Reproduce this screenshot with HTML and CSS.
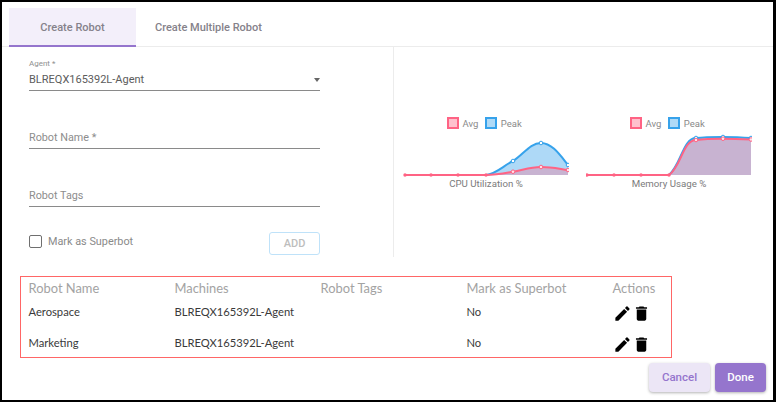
FILE: index.html
```html
<!DOCTYPE html>
<html lang="en">
<head>
<meta charset="utf-8">
<title>Create Robot</title>
<link rel="stylesheet" href="styles.css">
</head>
<body>
<div class="frame">
  <div class="tabs">
    <div class="tab active">Create Robot</div>
    <div class="tab">Create Multiple Robot</div>
  </div>
  <div class="main">
    <div class="form">
      <div class="field select">
        <div class="mini">Agent *</div>
        <div class="value">BLREQX165392L-Agent<span class="caret"></span></div>
      </div>
      <div class="field"><div class="placeholder">Robot Name *</div></div>
      <div class="field"><div class="placeholder">Robot Tags</div></div>
      <div class="check-row">
        <span class="checkbox"></span>
        <span class="check-label">Mark as Superbot</span>
        <span class="add">ADD</span>
      </div>
    </div>
    <div class="charts">
      <div class="chart cpu">
        <div class="legend">
          <span class="swatch pink"></span><span class="legend-text">Avg</span>
          <span class="swatch blue"></span><span class="legend-text">Peak</span>
        </div>
        <svg class="plot" width="166" height="48" viewBox="0 0 166 48">
          <path class="fill-blue" d="M83 46C93 45 100 37 110 32C120 26 127 14 138 14C149 14 157 26 165 36V46Z"/>
          <path class="line-blue" d="M83 46C93 45 100 37 110 32C120 26 127 14 138 14C149 14 157 26 165 36"/>
          <path class="fill-pink" d="M83 46C93 46 100 44.500 110 42.700C120 41 127 38 138 38C149 38 157 40 165 41V46Z"/>
          <path class="line-pink" d="M2 46H83C93 46 100 44.500 110 42.700C120 41 127 38 138 38C149 38 157 40 165 41"/>
          <g class="dots-blue"><circle cx="110" cy="32" r="1.800"/><circle cx="138" cy="14" r="1.800"/><circle cx="165" cy="36" r="1.800"/></g>
          <g class="dots-base"><circle cx="2" cy="46" r="1.700"/><circle cx="28" cy="46" r="1.700"/><circle cx="55" cy="46" r="1.700"/><circle cx="83" cy="46" r="1.700"/></g>
          <g class="dots-pink"><circle cx="110" cy="42.700" r="1.800"/><circle cx="138" cy="38" r="1.800"/><circle cx="165" cy="41" r="1.800"/></g>
        </svg>
        <div class="chart-label">CPU Utilization %</div>
      </div>
      <div class="chart mem">
        <div class="legend">
          <span class="swatch pink"></span><span class="legend-text">Avg</span>
          <span class="swatch blue"></span><span class="legend-text">Peak</span>
        </div>
        <svg class="plot" width="166" height="48" viewBox="0 0 166 48">
          <path class="fill-blue" d="M83 46C95 36 97 9 110 9C122 7.500 148 7.500 165 9V46Z"/>
          <path class="line-blue" d="M83 46C95 36 97 9 110 9C122 7.500 148 7.500 165 9"/>
          <path class="fill-pink" d="M83 46C95 38 97 11 110 11C122 9.500 148 9.700 165 10.500V46Z"/>
          <path class="line-pink" d="M1 46H83C95 38 97 11 110 11C122 9.500 148 9.700 165 10.500"/>
          <g class="dots-blue"><circle cx="110" cy="9" r="1.800"/><circle cx="137" cy="8" r="1.800"/><circle cx="165" cy="9" r="1.800"/></g>
          <g class="dots-base"><circle cx="1" cy="46" r="1.700"/><circle cx="28" cy="46" r="1.700"/><circle cx="55" cy="46" r="1.700"/><circle cx="83" cy="46" r="1.700"/></g>
          <g class="dots-pink"><circle cx="110" cy="11" r="1.800"/><circle cx="137" cy="9.700" r="1.800"/><circle cx="165" cy="10.500" r="1.800"/></g>
        </svg>
        <div class="chart-label">Memory Usage %</div>
      </div>
    </div>
  </div>
  <div class="robots">
    <div class="row head">
      <div>Robot Name</div><div>Machines</div><div>Robot Tags</div><div>Mark as Superbot</div><div>Actions</div>
    </div>
    <div class="row body">
      <div>Aerospace</div><div>BLREQX165392L-Agent</div><div></div><div>No</div>
      <div class="actions">
        <svg viewBox="0 0 24 24" width="19" height="19"><path d="M3 17.250V21h3.750L17.810 9.940l-3.750-3.750L3 17.250zM20.710 7.040a1 1 0 0 0 0-1.410l-2.340-2.340a1 1 0 0 0-1.410 0l-1.830 1.830 3.750 3.750 1.830-1.830z"/></svg>
        <svg viewBox="0 0 24 24" width="19" height="19"><path d="M6 19c0 1.100.9 2 2 2h8c1.100 0 2-.9 2-2V7H6v12zM19 4h-3.500l-1-1h-5l-1 1H5v2h14V4z"/></svg>
      </div>
    </div>
    <div class="row body">
      <div>Marketing</div><div>BLREQX165392L-Agent</div><div></div><div>No</div>
      <div class="actions">
        <svg viewBox="0 0 24 24" width="19" height="19"><path d="M3 17.250V21h3.750L17.810 9.940l-3.750-3.750L3 17.250zM20.710 7.040a1 1 0 0 0 0-1.410l-2.340-2.340a1 1 0 0 0-1.410 0l-1.830 1.830 3.750 3.750 1.830-1.830z"/></svg>
        <svg viewBox="0 0 24 24" width="19" height="19"><path d="M6 19c0 1.100.9 2 2 2h8c1.100 0 2-.9 2-2V7H6v12zM19 4h-3.500l-1-1h-5l-1 1H5v2h14V4z"/></svg>
      </div>
    </div>
  </div>
  <div class="footer">
    <span class="btn cancel">Cancel</span>
    <span class="btn done">Done</span>
  </div>
</div>
</body>
</html>
```
FILE: styles.css
```css
* { box-sizing: border-box; }
html, body { margin: 0; padding: 0; background: #fff; }
body { font-family: Roboto, "Liberation Sans", sans-serif; }

.frame {
  width: 776px;
  height: 402px;
  border: 2px solid #000;
  border-right-width: 3px;
  background: #fff;
  display: flex;
  flex-direction: column;
  overflow: hidden;
}

.tabs {
  display: flex;
  height: 45px;
  padding: 6px 0 0 7px;
  border-bottom: 1px solid #ececec;
  flex: none;
}
.tab {
  height: 39px;
  padding: 0 19px;
  font-size: 11px;
  font-weight: 500;
  color: #85828a;
  line-height: 40px;
}
.tab.active {
  width: 127px;
  padding: 0;
  text-align: center;
  background: #f3effa;
  border-bottom: 2px solid #9575cd;
}

.main { display: flex; height: 210px; flex: none; }
.form {
  width: 392px;
  height: 210px;
  padding: 0 73px 0 27px;
  border-right: 1px solid #ececec;
  display: flex;
  flex-direction: column;
}
.field {
  border-bottom: 1px solid #8a8a8a;
  height: 36px;
  margin-top: 22px;
  padding-top: 17px;
}
.field.select { height: 33px; margin-top: 11px; padding-top: 0; }
.mini { font-size: 8px; line-height: 11px; color: #8f8f8f; }
.value {
  font-size: 11px;
  line-height: 17px;
  margin-top: 2px;
  color: #5c5c5c;
  display: flex;
  align-items: center;
  justify-content: space-between;
}
.caret {
  width: 0;
  height: 0;
  border: 3.500px solid transparent;
  border-top: 4px solid #666;
  border-bottom: 0;
}
.placeholder { font-size: 10.800px; line-height: 16px; color: #8d8d8d; }
.check-row {
  display: flex;
  align-items: flex-start;
  height: 23px;
  margin-top: 25px;
}
.checkbox {
  width: 13px;
  height: 13px;
  margin-top: 3px;
  border: 1.500px solid #6f6f6f;
  border-radius: 2px;
  flex: none;
}
.check-label { font-size: 10.850px; line-height: 14px; color: #8a8a8a; margin: 3px 0 0 6px; }
.add {
  margin-left: auto;
  width: 51px;
  height: 23px;
  border: 1px solid #bfe2f9;
  border-radius: 3px;
  color: #bdbdbd;
  font-size: 11px;
  font-weight: 500;
  text-align: center;
  line-height: 22px;
}

.charts { display: flex; padding: 69px 0 0 9px; }
.chart { width: 183px; flex: none; display: flex; flex-direction: column; }
.legend { display: flex; align-items: center; height: 14px; padding-left: 44px; }
.swatch {
  width: 12px;
  height: 12px;
  border: 2px solid;
  flex: none;
}
.swatch.pink { border-color: #ff6384; background: #ffc0cd; }
.swatch.blue { border-color: #36a2eb; background: #afdaf7; }
.legend-text { font-size: 9.500px; color: #8a8a8a; margin: 0 7px 0 3.500px; }
.plot { display: block; margin-top: -1px; }
.chart-label { font-size: 9.700px; line-height: 12px; color: #7b7b7b; width: 166px; text-align: center; margin-top: 1px; }

.fill-blue { fill: #aed9f7; }
.fill-pink { fill: rgba(255, 99, 132, .32); }
.line-blue { fill: none; stroke: #36a2eb; stroke-width: 2; }
.line-pink { fill: none; stroke: #ff6384; stroke-width: 2; }
.dots-blue circle { fill: #fff; stroke: #36a2eb; stroke-width: 1; }
.dots-pink circle { fill: #ffe3e9; stroke: #ff6384; stroke-width: 1; }
.dots-base circle { fill: #ff6384; }

.robots {
  flex: none;
  width: 652px;
  height: 82px;
  margin: 19px 0 0 18px;
  border: 1.500px solid #f66;
  padding: 0 0 0 7.500px;
  font-family: Lato, "Liberation Sans", sans-serif;
}
.row { display: grid; grid-template-columns: repeat(4, 146px) 1fr; align-items: center; }
.head { height: 22px; font-size: 12.900px; color: #a3a3a3; }
.body { height: 25px; font-size: 11.200px; color: #3a3a3a; }
.body + .body { margin-top: 6px; }
.actions { display: flex; margin-top: 3px; }
.actions svg { display: block; fill: #000; }

.footer {
  flex: none;
  display: flex;
  justify-content: flex-end;
  gap: 5px;
  margin-top: 5px;
  padding-right: 7px;
}
.btn {
  height: 29px;
  border-radius: 4px;
  font-size: 11.500px;
  font-weight: 500;
  text-align: center;
  line-height: 29px;
  box-shadow: 0 1px 3px rgba(0, 0, 0, .3);
}
.cancel { width: 61px; background: #ece6f6; color: #9575cd; }
.done { width: 51px; background: #9575cd; color: #fff; }
```
